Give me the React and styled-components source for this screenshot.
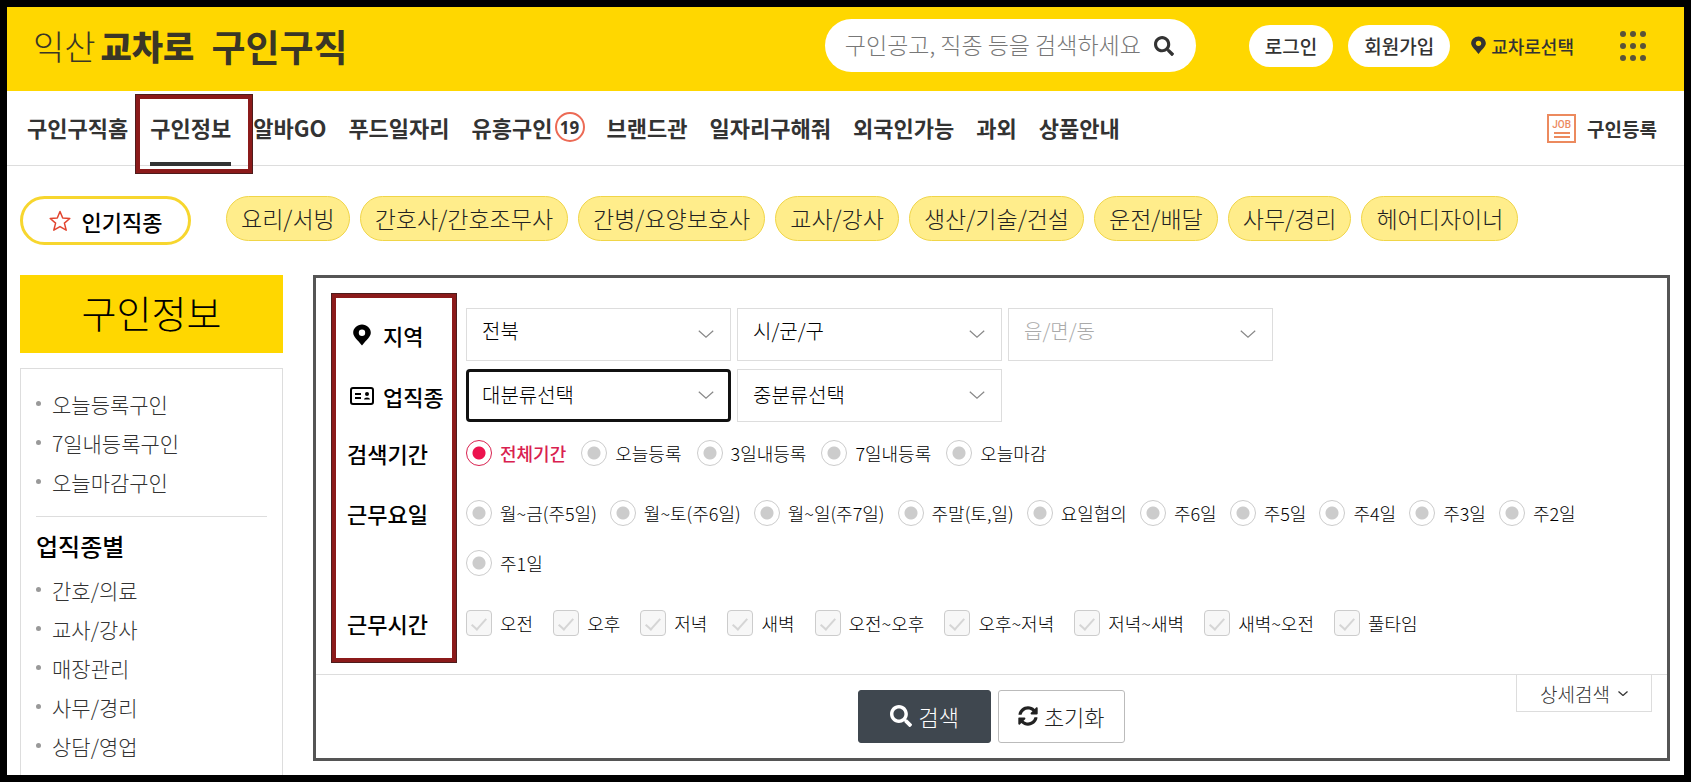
import React from "react";
import styled, { createGlobalStyle, css } from "styled-components";
import { FaSearch, FaSyncAlt } from "react-icons/fa";

const menus = [
  { name: "구인구직홈" },
  { name: "구인정보", active: true },
  { name: "알바GO" },
  { name: "푸드일자리" },
  { name: "유흥구인", adult: true },
  { name: "브랜드관" },
  { name: "일자리구해줘" },
  { name: "외국인가능" },
  { name: "과외" },
  { name: "상품안내" },
];

const popular = [
  "요리/서빙",
  "간호사/간호조무사",
  "간병/요양보호사",
  "교사/강사",
  "생산/기술/건설",
  "운전/배달",
  "사무/경리",
  "헤어디자이너",
];

const quickLinks = ["오늘등록구인", "7일내등록구인", "오늘마감구인"];
const jobLinks = ["간호/의료", "교사/강사", "매장관리", "사무/경리", "상담/영업"];

const periods = ["전체기간", "오늘등록", "3일내등록", "7일내등록", "오늘마감"];
const days = [
  "월~금(주5일)",
  "월~토(주6일)",
  "월~일(주7일)",
  "주말(토,일)",
  "요일협의",
  "주6일",
  "주5일",
  "주4일",
  "주3일",
  "주2일",
  "주1일",
];
const times = [
  "오전",
  "오후",
  "저녁",
  "새벽",
  "오전~오후",
  "오후~저녁",
  "저녁~새벽",
  "새벽~오전",
  "풀타임",
];

function PinIcon({ width, hole }) {
  return (
    <svg width={width} viewBox="0 0 18 22" aria-hidden="true">
      <path
        d="M9 0.5C4.2 0.5 0.2 4.2 0.2 8.8C0.2 12.6 4.4 15.8 9 21.5C13.6 15.8 17.8 12.6 17.8 8.8C17.8 4.2 13.8 0.5 9 0.5Z"
        fill="currentColor"
      />
      <circle cx="9" cy="8.8" r="3.2" fill={hole} />
    </svg>
  );
}

function DotsIcon() {
  return (
    <svg width="26" height="30" viewBox="0 0 26 30" aria-hidden="true">
      {[3, 15, 27].map((y) =>
        [3, 13, 23].map((x) => (
          <circle key={`${x}-${y}`} cx={x} cy={y} r="3" fill="#5a533a" />
        ))
      )}
    </svg>
  );
}

function StarIcon() {
  return (
    <svg width="22" height="22" viewBox="0 0 22 22" aria-hidden="true">
      <path
        d="M11 1.5L13.7 8L20.8 8.5L15.4 13.1L17.2 20.2L11 16.6L4.8 20.2L6.6 13.1L1.2 8.5L8.3 8Z"
        fill="none"
        stroke="#e2452f"
        strokeWidth="1.5"
        strokeLinejoin="round"
      />
    </svg>
  );
}

function CardIcon() {
  return (
    <svg width="24" height="18" viewBox="0 0 24 18" aria-hidden="true">
      <rect x="1" y="1" width="22" height="16" rx="2" fill="none" stroke="#000" strokeWidth="2" />
      <path d="M5 7H11M5 11H11" stroke="#000" strokeWidth="2" />
      <circle cx="17" cy="7" r="2" fill="#000" />
      <path d="M14 12.5C14 9.8 20 9.8 20 12.5Z" fill="#000" />
    </svg>
  );
}

function ChevronIcon({ size, color, width }) {
  return (
    <svg width={size} height={size / 2} viewBox="0 0 16 8" aria-hidden="true">
      <path d="M0.8 0.8L8 7.2L15.2 0.8" fill="none" stroke={color} strokeWidth={width} />
    </svg>
  );
}

function Option({ type, name, label, checked }) {
  const Mark = type === "radio" ? Radio : Checkbox;
  return (
    <OptionLabel $checked={checked}>
      <Mark type={type} name={name} defaultChecked={checked} />
      {label}
    </OptionLabel>
  );
}

function Dropdown({ label, value, raised, active, disabled }) {
  return (
    <SelectWrap>
      <Select aria-label={label} $raised={raised} $active={active} disabled={disabled}>
        <option>{value}</option>
      </Select>
      <Arrow>
        <ChevronIcon size={16} color="#888" width={1.2} />
      </Arrow>
    </SelectWrap>
  );
}

function App() {
  return (
    <Frame>
      <GlobalStyle />
      <Header>
        <Logo href="#">
          <LogoCity>익산</LogoCity>
          <LogoName>교차로</LogoName>
          <LogoTitle>구인구직</LogoTitle>
        </Logo>
        <SearchBar role="search">
          <SearchInput
            type="text"
            aria-label="검색어"
            placeholder="구인공고, 직종 등을 검색하세요"
          />
          <SearchIconButton type="submit" aria-label="검색">
            <FaSearch size={20} />
          </SearchIconButton>
        </SearchBar>
        <Member>
          <MemberButton type="button">로그인</MemberButton>
          <MemberButton type="button">회원가입</MemberButton>
        </Member>
        <Region href="#">
          <PinIcon width={15} hole="#ffd700" />
          교차로선택
        </Region>
        <DotsButton type="button" aria-label="전체메뉴">
          <DotsIcon />
        </DotsButton>
      </Header>

      <Nav>
        <Menu>
          {menus.map((menu) => (
            <MenuItem key={menu.name} href="#" $active={menu.active}>
              {menu.name}
              {menu.adult && <Adult>19</Adult>}
            </MenuItem>
          ))}
        </Menu>
        <Register href="#">
          <JobMark>
            JOB
            <JobLines />
          </JobMark>
          구인등록
        </Register>
      </Nav>

      <Popular>
        <PopularTitle>
          <StarIcon />
          인기직종
        </PopularTitle>
        <Tags>
          {popular.map((tag) => (
            <Tag key={tag} href="#">
              {tag}
            </Tag>
          ))}
        </Tags>
      </Popular>

      <Main>
        <Side>
          <SideTitle>구인정보</SideTitle>
          <SideBox>
            <SideList>
              {quickLinks.map((link) => (
                <SideItem key={link}>
                  <a href="#">{link}</a>
                </SideItem>
              ))}
            </SideList>
            <SideHeading>업직종별</SideHeading>
            <SideList>
              {jobLinks.map((link) => (
                <SideItem key={link}>
                  <a href="#">{link}</a>
                </SideItem>
              ))}
            </SideList>
          </SideBox>
        </Side>

        <Panel>
          <Fields>
            <SelectRow>
              <RowTitle>
                <RowIcon>
                  <PinIcon width={18} hole="#fff" />
                </RowIcon>
                지역
              </RowTitle>
              <Dropdown label="시/도" value="전북" raised />
              <Dropdown label="시/군/구" value="시/군/구" raised />
              <Dropdown label="읍/면/동" value="읍/면/동" raised disabled />
            </SelectRow>
            <SelectRow>
              <RowTitle>
                <RowIcon>
                  <CardIcon />
                </RowIcon>
                업직종
              </RowTitle>
              <Dropdown label="대분류" value="대분류선택" active />
              <Dropdown label="중분류" value="중분류선택" />
            </SelectRow>
            <OptionRow>
              <RowTitle>검색기간</RowTitle>
              <Options $gap={15}>
                {periods.map((label, i) => (
                  <Option key={label} type="radio" name="period" label={label} checked={i === 0} />
                ))}
              </Options>
            </OptionRow>
            <OptionRow>
              <RowTitle>근무요일</RowTitle>
              <Options $gap={13}>
                {days.map((label) => (
                  <Option key={label} type="radio" name="day" label={label} />
                ))}
              </Options>
            </OptionRow>
            <OptionRow>
              <RowTitle>근무시간</RowTitle>
              <Options $gap={20}>
                {times.map((label) => (
                  <Option key={label} type="checkbox" name="time" label={label} />
                ))}
              </Options>
            </OptionRow>
          </Fields>
          <Actions>
            <Buttons>
              <ActionButton type="submit" $primary>
                <FaSearch size={22} />
                검색
              </ActionButton>
              <ActionButton type="reset">
                <FaSyncAlt size={20} />
                초기화
              </ActionButton>
            </Buttons>
            <Detail type="button">
              상세검색
              <ChevronIcon size={10} color="#333" width={2} />
            </Detail>
          </Actions>
        </Panel>
      </Main>
    </Frame>
  );
}

export default App;

const GlobalStyle = createGlobalStyle`
  *, *::before, *::after {
    box-sizing: border-box;
  }
  body {
    margin: 0;
    font-family: "Noto Sans CJK KR", sans-serif;
    color: #333;
    background: #fff;
  }
  a {
    color: inherit;
    text-decoration: none;
  }
  button, input, select {
    font-family: inherit;
    margin: 0;
  }
  svg {
    flex: none;
  }
`;

const redBox = css`
  content: "";
  position: absolute;
  border: 5px solid #8b1a1a;
  outline: 1px solid #4d1c1c;
  outline-offset: -1px;
  pointer-events: none;
`;

const Frame = styled.div`
  min-height: 100vh;
  display: flex;
  flex-direction: column;
  border: 7px solid #000;
`;

const Header = styled.header`
  display: flex;
  align-items: center;
  height: 84px;
  padding: 0 38px 7px 26px;
  background: #ffd700;
`;

const Logo = styled.a`
  display: flex;
  align-items: center;
  margin-right: auto;
  font-size: 34px;
  line-height: 40px;
  color: #3a3626;
`;
const LogoCity = styled.span`
  font-weight: 300;
`;
const LogoName = styled.span`
  margin-left: 5px;
  font-weight: 900;
`;
const LogoTitle = styled.span`
  margin-left: 17px;
  font-size: 37px;
  font-weight: 700;
`;

const SearchBar = styled.form`
  display: flex;
  align-items: center;
  width: 371px;
  height: 53px;
  padding: 0 22px 0 20px;
  background: #fff;
  border-radius: 27px;
`;
const SearchInput = styled.input`
  flex: 1;
  min-width: 0;
  padding: 0 0 4px;
  border: 0;
  outline: 0;
  background: none;
  font-size: 23px;
  font-weight: 300;

  &::placeholder {
    color: #777;
  }
`;
const SearchIconButton = styled.button`
  display: flex;
  padding: 0;
  border: 0;
  background: none;
  color: #333;
`;

const Member = styled.div`
  display: flex;
  gap: 15px;
  margin-left: 53px;
`;
const MemberButton = styled.button`
  height: 42px;
  padding: 0 16px;
  border: 0;
  border-radius: 21px;
  background: #fff;
  color: #333;
  font-size: 19px;
  font-weight: 500;
`;
const Region = styled.a`
  display: flex;
  align-items: center;
  gap: 5px;
  margin-left: 21px;
  font-size: 18px;
  font-weight: 500;
`;
const DotsButton = styled.button`
  display: flex;
  margin-left: 46px;
  padding: 0;
  border: 0;
  background: none;
`;

const Nav = styled.nav`
  display: flex;
  justify-content: space-between;
  height: 75px;
  padding: 0 27px 0 20px;
  border-bottom: 1px solid #ddd;
`;
const Menu = styled.div`
  display: flex;
  gap: 22px;
`;
const MenuItem = styled.a`
  position: relative;
  display: flex;
  align-items: center;
  padding-bottom: 2px;
  font-size: 22px;
  font-weight: 700;
  white-space: nowrap;

  ${(props) =>
    props.$active &&
    css`
      &::before {
        content: "";
        position: absolute;
        left: 0;
        right: 0;
        bottom: -1px;
        height: 4px;
        background: #333;
      }
      &::after {
        ${redBox}
        top: 3px;
        bottom: -9px;
        left: -15px;
        right: -22px;
      }
    `}
`;
const Adult = styled.span`
  display: flex;
  align-items: center;
  justify-content: center;
  width: 30px;
  height: 30px;
  margin-left: 2px;
  border: 2px solid #ec6a55;
  border-radius: 50%;
  font-family: "Open Sans", sans-serif;
  font-size: 17px;
`;
const Register = styled.a`
  display: flex;
  align-items: center;
  gap: 11px;
  font-size: 19px;
  font-weight: 700;
`;
const JobMark = styled.span`
  display: flex;
  flex-direction: column;
  align-items: center;
  justify-content: center;
  gap: 2px;
  width: 29px;
  height: 29px;
  border: 2px solid #ec8a5e;
  color: #ec8a5e;
  font-family: Roboto, sans-serif;
  font-size: 10px;
  font-weight: 500;
  line-height: 11px;
`;
const JobLines = styled.span`
  width: 16px;
  height: 6px;
  border: solid #ec8a5e;
  border-width: 2px 0;
`;

const Popular = styled.section`
  display: flex;
  align-items: flex-start;
  gap: 35px;
  padding: 30px 13px;
`;
const PopularTitle = styled.h2`
  display: flex;
  align-items: center;
  justify-content: center;
  gap: 11px;
  width: 171px;
  height: 49px;
  margin: 0;
  border: 3px solid #f7d62e;
  border-radius: 25px;
  color: #000;
  font-size: 22px;
  font-weight: 500;
`;
const Tags = styled.div`
  display: flex;
  flex-wrap: wrap;
  gap: 10px;
`;
const Tag = styled.a`
  padding: 0 14px;
  border: 1px solid #f0d548;
  border-radius: 23px;
  background: #ffed8b;
  color: #222;
  font-size: 23px;
  font-weight: 300;
  line-height: 43px;
`;

const Main = styled.main`
  flex: 1;
  display: flex;
  gap: 30px;
  padding: 0 14px 0 13px;
`;

const Side = styled.aside`
  flex: none;
  display: flex;
  flex-direction: column;
  gap: 15px;
  width: 263px;
`;
const SideTitle = styled.h1`
  margin: 0;
  padding-bottom: 4px;
  background: #ffd700;
  color: #000;
  font-size: 38px;
  font-weight: 300;
  line-height: 74px;
  text-align: center;
`;
const SideBox = styled.div`
  flex: 1;
  padding: 15px 15px 0;
  border: 1px solid #ddd;
  border-bottom: 0;
`;
const SideList = styled.ul`
  margin: 0;
  padding: 0;
  list-style: none;
`;
const SideItem = styled.li`
  display: flex;
  align-items: center;
  gap: 11px;
  height: 39px;
  font-size: 21px;
  font-weight: 300;

  &::before {
    content: "";
    width: 5px;
    height: 5px;
    border-radius: 50%;
    background: #999;
  }
`;
const SideHeading = styled.h3`
  margin: 15px 0 0;
  padding: 9px 0 4px;
  border-top: 1px solid #ddd;
  color: #000;
  font-size: 24px;
  font-weight: 500;
  line-height: 40px;
`;

const Panel = styled.form`
  flex: 1;
  min-width: 0;
  align-self: flex-start;
  border: 3px solid #555;
`;
const Fields = styled.div`
  position: relative;
  display: flex;
  flex-direction: column;
  gap: 8px;
  padding: 30px 31px 22px;

  &::after {
    ${redBox}
    top: 15px;
    bottom: 11px;
    left: 15px;
    width: 126px;
  }
`;
const SelectRow = styled.div`
  display: flex;
  align-items: center;
  gap: 6px;
`;
const OptionRow = styled.div`
  display: flex;
  align-items: flex-start;
  gap: 6px;
  padding: 10px 0 16px;
`;
const RowTitle = styled.div`
  flex: none;
  display: flex;
  align-items: center;
  width: 113px;
  height: 26px;
  color: #000;
  font-size: 22px;
  font-weight: 500;
  white-space: nowrap;
`;
const RowIcon = styled.span`
  display: flex;
  justify-content: center;
  width: 30px;
  margin-right: 6px;
`;

const SelectWrap = styled.div`
  position: relative;
  flex: 0 1 265px;
`;
const Select = styled.select`
  display: block;
  width: 100%;
  height: 53px;
  padding: ${(props) => (props.$raised ? "0 36px 8px 15px" : "0 36px 2px 15px")};
  border: 1px solid #ddd;
  border-radius: 0;
  appearance: none;
  background: #fff;
  color: #000;
  font-size: 20px;
  font-weight: 300;

  &:disabled {
    color: #aaa;
    opacity: 1;
  }

  ${(props) =>
    props.$active &&
    css`
      padding-left: 13px;
      border: 3px solid #111;
      border-radius: 4px;
    `}
`;
const Arrow = styled.span`
  position: absolute;
  top: 22px;
  right: 17px;
  display: flex;
  pointer-events: none;
`;

const Options = styled.div`
  display: flex;
  flex-wrap: wrap;
  gap: 24px ${(props) => props.$gap}px;
`;
const OptionLabel = styled.label`
  display: flex;
  align-items: center;
  gap: 8px;
  height: 26px;
  color: ${(props) => (props.$checked ? "#d9214f" : "#000")};
  font-size: 18px;
  font-weight: ${(props) => (props.$checked ? 500 : 300)};
  white-space: nowrap;
`;
const Radio = styled.input`
  flex: none;
  width: 26px;
  height: 26px;
  border: 1px solid #ccc;
  border-radius: 50%;
  appearance: none;
  background: radial-gradient(circle, #ccc 6px, #fff 7px);

  &:checked {
    border-color: #d9214f;
    background: radial-gradient(circle, #ec134e 6px, #fff 7px);
  }
`;
const Checkbox = styled.input`
  flex: none;
  display: flex;
  align-items: center;
  justify-content: center;
  width: 26px;
  height: 26px;
  padding-bottom: 2px;
  border: 1px solid #ccc;
  border-radius: 4px;
  appearance: none;
  background: #f7f7f7;

  &::after {
    content: "";
    width: 8px;
    height: 15px;
    border: solid #d5d5d5;
    border-width: 0 2px 2px 0;
    transform: rotate(42deg);
  }
`;

const Actions = styled.div`
  display: grid;
  grid-template-columns: 1fr auto 1fr;
  align-items: start;
  border-top: 1px solid #ddd;
`;
const Buttons = styled.div`
  grid-column: 2;
  display: flex;
  gap: 7px;
  padding: 15px 0;
`;
const ActionButton = styled.button`
  display: flex;
  align-items: center;
  justify-content: center;
  gap: 6px;
  height: 53px;
  padding: 0 ${(props) => (props.$primary ? 31 : 19)}px 2px;
  border: 1px solid ${(props) => (props.$primary ? "#3f474f" : "#bbb")};
  border-radius: 3px;
  background: ${(props) => (props.$primary ? "#3f474f" : "#fff")};
  color: ${(props) => (props.$primary ? "#fff" : "#222")};
  font-size: 22px;
  font-weight: 300;
`;
const Detail = styled.button`
  justify-self: end;
  display: flex;
  align-items: center;
  gap: 8px;
  height: 37px;
  margin-right: 15px;
  padding: 0 23px;
  border: 1px solid #ddd;
  border-top: 0;
  background: #fff;
  color: #333;
  font-size: 19px;
  font-weight: 300;
`;
